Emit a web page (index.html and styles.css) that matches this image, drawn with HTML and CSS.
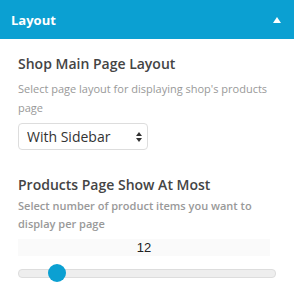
FILE: index.html
```html
<!DOCTYPE html>
<html lang="en">
<head>
    <meta charset="UTF-8">
    <meta name="viewport" content="width=device-width, initial-scale=1.0">
    <title>Layout</title>
    <link rel="stylesheet" href="styles.css">
</head>
<body>
    <!-- Section header -->
    <header class="section-header">
        <div class="section-title">Layout</div>
        <svg class="toggle-arrow" width="8" height="6" viewBox="0 0 8 6"><polygon points="4,0 8,6 0,6" fill="#fff"/></svg>
    </header>

    <div class="section-body">
        <div class="control">
            <h3 class="control-title">Shop Main Page Layout</h3>
            <p class="control-desc">Select page layout for displaying shop's products page</p>
            <div class="select-wrap">
                <select class="layout-select">
                    <option>With Sidebar</option>
                    <option>Full Width</option>
                </select>
                <svg class="select-arrows" width="6" height="10" viewBox="0 0 6 10"><polygon points="3,0 6,4 0,4" fill="#333"/><polygon points="0,6 6,6 3,10" fill="#333"/></svg>
            </div>
        </div>

        <div class="control">
            <h3 class="control-title">Products Page Show At Most</h3>
            <p class="control-desc strong">Select number of product items you want to display per page</p>
            <div class="range-value" id="rangeValue">12</div>
            <input type="range" class="range" id="range" min="0" max="100" value="12">
        </div>
    </div>

    <script>
        // keep the number in sync with the slider
        const range = document.getElementById('range');
        range.addEventListener('input', function () {
            document.getElementById('rangeValue').textContent = range.value;
        });
    </script>
</body>
</html>
```

FILE: styles.css
```css
body {
    font-family: "Open Sans", Arial, sans-serif;
    margin: 0;
    background: #fff;
}

/* Blue section header */
.section-header {
    height: 39px;
    background-color: #0ba0d2;
    display: flex;
    justify-content: space-between;
    align-items: center;
    padding: 0 13px 0 11px;
}

.section-title {
    color: #fff;
    font-size: 13px;
    font-weight: bold;
}

.toggle-arrow {
    display: block;
}

/* Controls */
.section-body {
    padding: 15px 18px 0;
}

.control {
    margin-bottom: 25px;
}

.control:last-child {
    margin-bottom: 0;
}

.control-title {
    margin: 0;
    font-size: 14px;
    font-weight: 600;
    line-height: 20px;
    color: #444;
}

.control-desc {
    margin: 5px 0 6px;
    font-size: 11px;
    line-height: 19px;
    color: #999;
}

.control-desc.strong {
    margin-top: 2px;
    line-height: 18px;
    font-weight: 600;
}

.select-wrap {
    position: relative;
    width: 130px;
}

.layout-select {
    -webkit-appearance: none;
    appearance: none;
    width: 130px;
    height: 27px;
    padding: 0 8px;
    border: 1px solid #ddd;
    border-radius: 4px;
    background: #fff;
    font-family: "Open Sans", Arial, sans-serif;
    font-size: 14px;
    color: #333;
}

.select-arrows {
    position: absolute;
    right: 6px;
    top: 9px;
}

/* Slider */
.range-value {
    width: 252px;
    height: 17px;
    line-height: 17px;
    background: #fafafa;
    text-align: center;
    font-family: "Liberation Sans", Arial, sans-serif;
    font-size: 13px;
    color: #222;
}

.range {
    -webkit-appearance: none;
    appearance: none;
    display: block;
    width: 258px;
    height: 18px;
    margin: 8px 0 0;
    background: transparent;
}

.range::-webkit-slider-runnable-track {
    height: 9px;
    background: #eee;
    border: 1px solid #ddd;
    border-radius: 4px;
    box-sizing: border-box;
}

.range::-webkit-slider-thumb {
    -webkit-appearance: none;
    width: 18px;
    height: 18px;
    margin-top: -5.5px;
    border: none;
    border-radius: 50%;
    background: #0ba0d2;
}
```
